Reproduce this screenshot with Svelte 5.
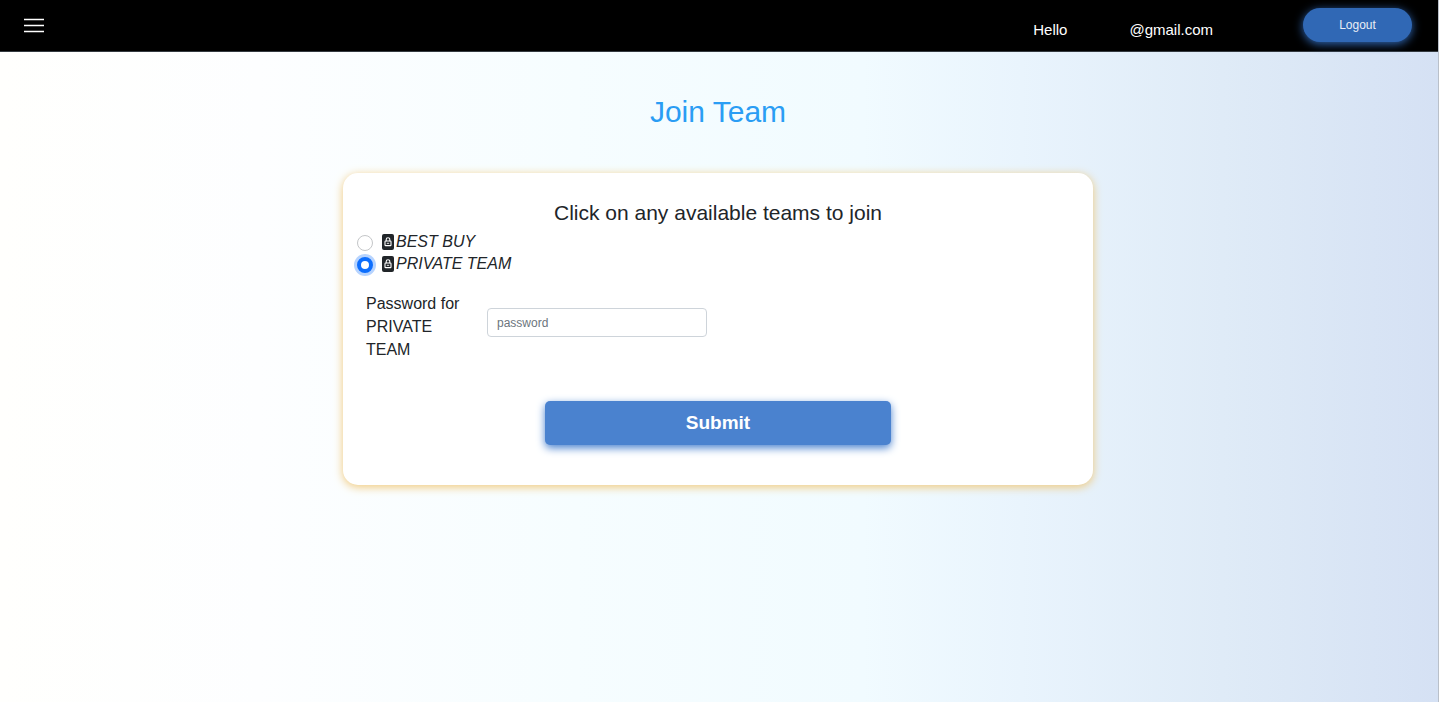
<script>
  const teams = ['BEST BUY', 'PRIVATE TEAM'];
  let selected = $state('PRIVATE TEAM');
  let password = $state('');
</script>

<div class="page">
  <header>
    <button class="menu" type="button" aria-label="Menu">
      <svg viewBox="0 0 20 16" width="20" height="16" aria-hidden="true">
        <path d="M0 2.5H20M0 8.5H20M0 14.5H20" fill="none" stroke="#fff" stroke-width="1.6" />
      </svg>
    </button>
    <p class="user"><span>Hello</span><span>@gmail.com</span></p>
    <button class="logout" type="button">Logout</button>
  </header>

  <main>
    <h1>Join Team</h1>
    <form onsubmit={(event) => event.preventDefault()}>
      <h2>Click on any available teams to join</h2>
      <div class="teams">
        {#each teams as team}
          <label class="team">
            <input type="radio" name="team" value={team} bind:group={selected} />
            <svg viewBox="0 0 12 16" width="12" height="16" aria-hidden="true">
              <rect width="12" height="16" rx="2" fill="#212529" />
              <path d="M4.2 7.2V5.5a1.8 1.8 0 0 1 3.6 0v1.7" fill="none" stroke="#fff" stroke-width="1.1" />
              <rect x="3" y="7" width="6" height="4.6" rx=".7" fill="none" stroke="#fff" stroke-width="1.1" />
              <path d="M4.8 9.3H7.2" stroke="#fff" stroke-width=".9" />
            </svg>
            <em>{team}</em>
          </label>
        {/each}
      </div>
      <div class="field">
        <label for="password">Password for {selected}</label>
        <input id="password" type="password" placeholder="password" bind:value={password} />
      </div>
      <button class="submit" type="submit">Submit</button>
    </form>
  </main>
</div>

<style>
  :global(body) {
    margin: 0;
  }

  .page,
  .page * {
    box-sizing: border-box;
  }

  .page {
    min-height: 100vh;
    border-right: 1px solid #b9c0ca;
    background: linear-gradient(90deg, #fffffd 0%, #fdfeff 18%, #f6fdff 40%, #f1fbff 60%, #e9f4fd 71%, #dfebf7 85%, #d5e1f4 100%);
    color: #212529;
    font-family: "Liberation Sans", Arial, sans-serif;
    font-size: 16px;
  }

  button,
  input {
    font-family: inherit;
  }

  header {
    display: flex;
    align-items: center;
    height: 52px;
    padding: 0 26px 2px 24px;
    border-bottom: 1px solid #343a40;
    background: #000;
  }

  .menu {
    display: flex;
    padding: 0;
    border: 0;
    background: none;
  }

  .user {
    display: flex;
    gap: 62px;
    margin: 10px 90px 0 auto;
    color: #fff;
    font-size: 15px;
  }

  .logout {
    width: 109px;
    height: 34px;
    padding: 0;
    border: 0;
    border-radius: 17px;
    background: #3068b5;
    box-shadow: 0 2px 10px #3068b5;
    color: #e9eef6;
    font-size: 12px;
  }

  main {
    padding: 42px 18px 42px 16px;
  }

  h1 {
    margin: 0 0 43px;
    color: #2a9df4;
    font-size: 30px;
    font-weight: 400;
    line-height: 36px;
    text-align: center;
  }

  form {
    max-width: 750px;
    margin: 0 auto;
    padding: 26px 14px 40px;
    border-radius: 15px;
    background: #fff;
    box-shadow: 0 2px 10px #f0c878;
  }

  h2 {
    margin: 0 0 5px;
    font-size: 21px;
    font-weight: 400;
    line-height: 27px;
    text-align: center;
  }

  .team {
    display: flex;
    align-items: center;
    width: fit-content;
    height: 22px;
  }

  .team input {
    width: 16px;
    height: 16px;
    margin: 2px 9px 0 0;
    border: 1px solid #c4c6c8;
    border-radius: 50%;
    background: #fff;
    appearance: none;
  }

  .team input:checked {
    border: 4px solid #0d6efd;
    box-shadow: 0 0 0 3px #b6d3fe;
  }

  .team svg {
    margin-right: 2px;
  }

  .field {
    display: flex;
    align-items: center;
    gap: 21px;
    margin: 17px 0 40px 9px;
  }

  .field label {
    width: 100px;
    line-height: 23px;
  }

  .field input {
    width: 220px;
    height: 29px;
    margin: 0 0 8px;
    padding: 0 9px;
    border: 1px solid #ced4da;
    border-radius: 4px;
    background: #fff;
    font-size: 12px;
  }

  .field input::placeholder {
    color: #6c757d;
    opacity: 1;
  }

  .submit {
    display: block;
    width: 48%;
    height: 44px;
    margin: 0 auto;
    border: 0;
    border-radius: 5px;
    background: #4a82cf;
    box-shadow: 0 3px 9px #4a82cf;
    color: #fff;
    font-size: 19px;
    font-weight: 700;
  }
</style>
